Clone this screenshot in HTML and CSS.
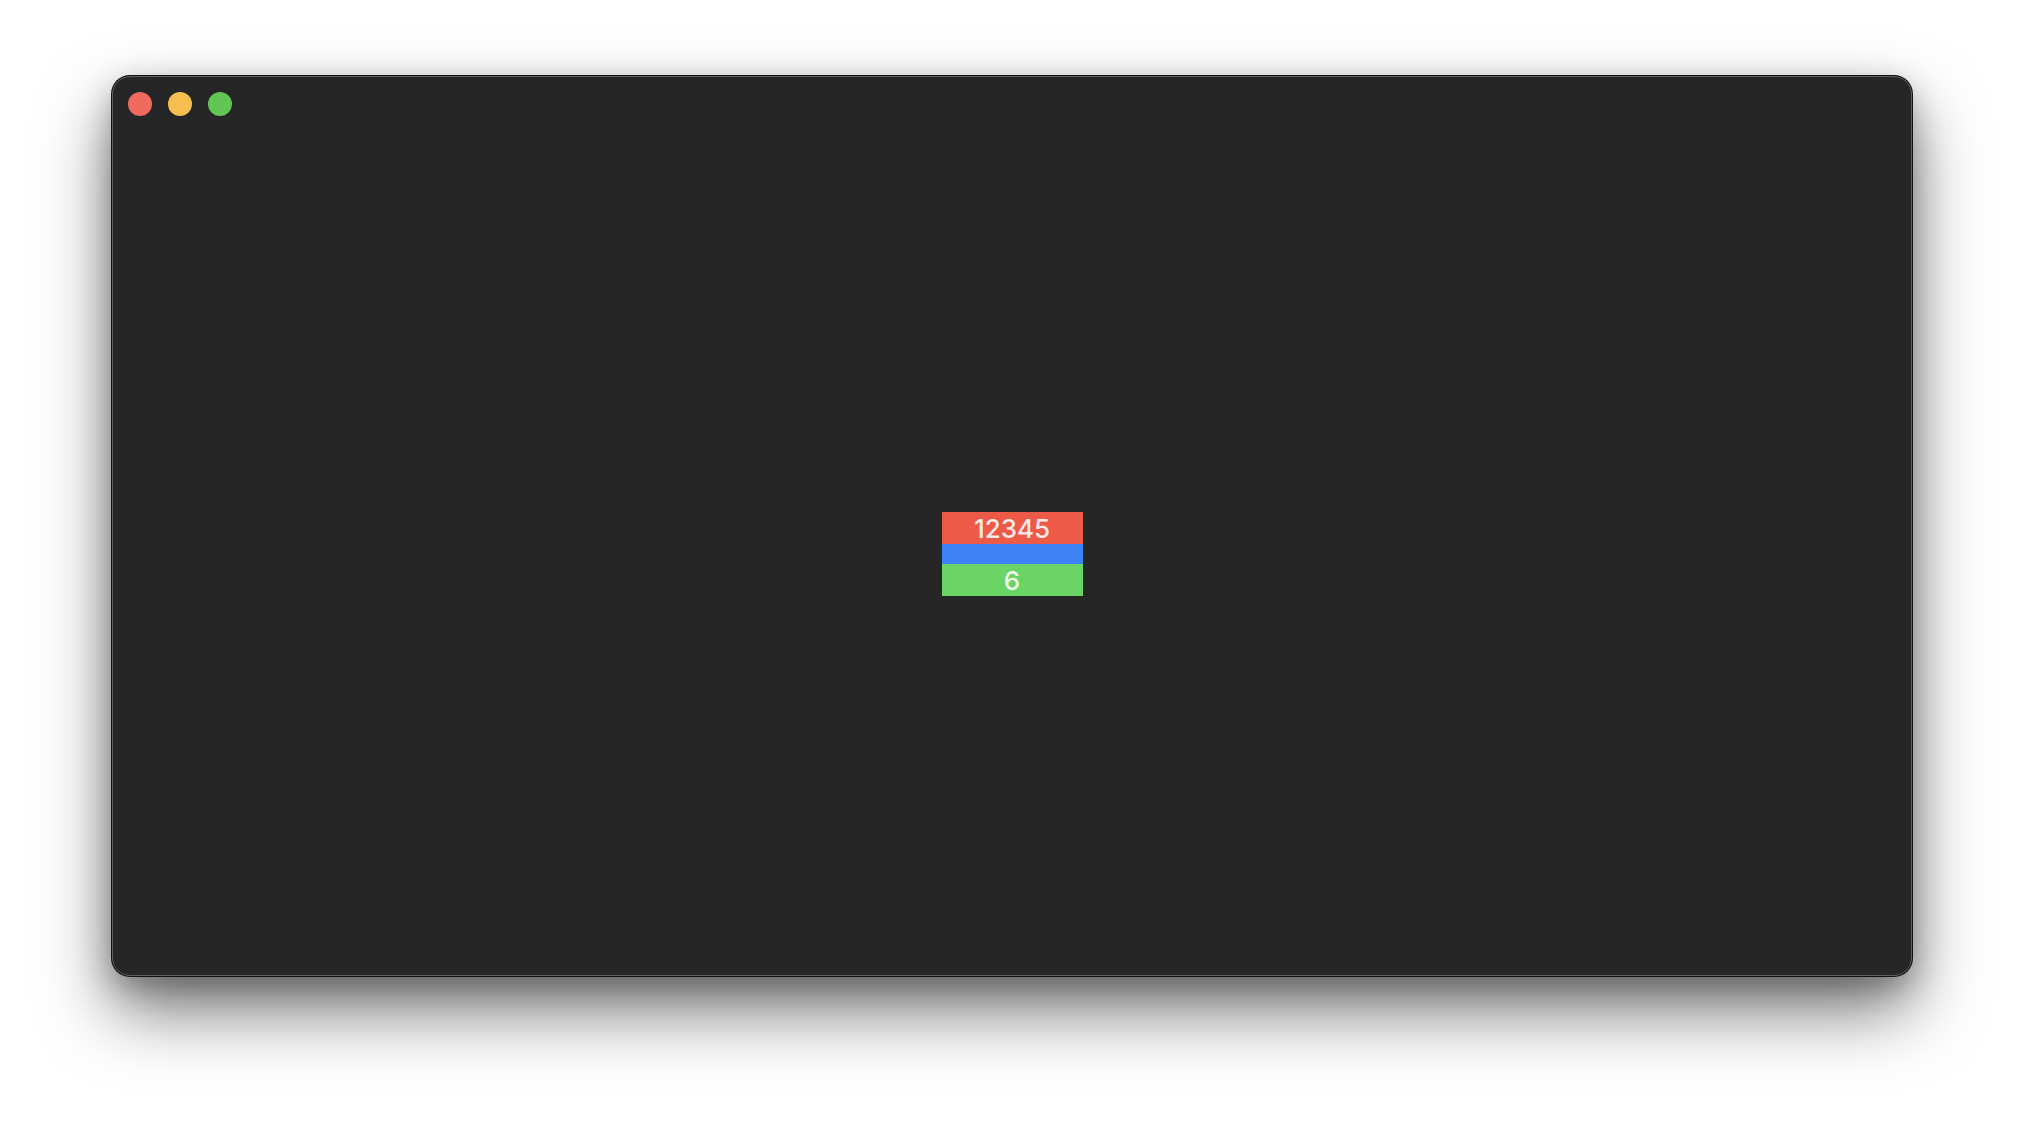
FILE: index.html
```html
<!DOCTYPE html>
<html>
<head>
<meta charset="utf-8">
<link rel="stylesheet" href="styles.css">
</head>
<body>
<div class="stage">
  <div class="window">
    <div class="titlebar">
      <span class="light red"></span>
      <span class="light yellow"></span>
      <span class="light green"></span>
    </div>
    <div class="content">
      <div class="stack">
        <div class="cell cell-red">12345</div>
        <div class="cell cell-blue"></div>
        <div class="cell cell-green">6</div>
      </div>
    </div>
  </div>
</div>
</body>
</html>
```

FILE: styles.css
```css
html, body {
  margin: 0;
  padding: 0;
  background: #ffffff;
  width: 2024px;
  height: 1124px;
  overflow: hidden;
}
.stage {
  padding: 76px 112px 0 112px;
}
.window {
  width: 1800px;
  height: 900px;
  box-sizing: border-box;
  background: #262626;
  border-radius: 18px;
  border: 1px solid #606060;
  box-shadow: 0 0 0 1px #111, 0 34px 70px rgba(0,0,0,0.55), 0 10px 30px rgba(0,0,0,0.25);
  display: flex;
  flex-direction: column;
}
.titlebar {
  height: 55px;
  box-sizing: border-box;
  padding: 15px 0 0 15px;
  display: flex;
  gap: 16px;
  align-items: flex-start;
}
.light {
  width: 24px;
  height: 24px;
  border-radius: 50%;
}
.red { background: #ee6a5f; }
.yellow { background: #f5be4f; }
.green { background: #62c554; }
.content {
  flex: 1;
  display: flex;
  align-items: center;
  justify-content: center;
}
.stack {
  width: 141px;
  display: flex;
  flex-direction: column;
}
.cell {
  font-family: "Inter", "Liberation Sans", sans-serif;
  font-size: 26px;
  font-weight: 500;
  color: rgba(255,255,255,0.88);
  text-align: center;
  height: 32px;
  line-height: 33px;
}
.cell-red { background: #ee5a48; }
.cell-blue { background: #3e82f7; height: 20px; }
.cell-green { background: #6ad464; }
```
